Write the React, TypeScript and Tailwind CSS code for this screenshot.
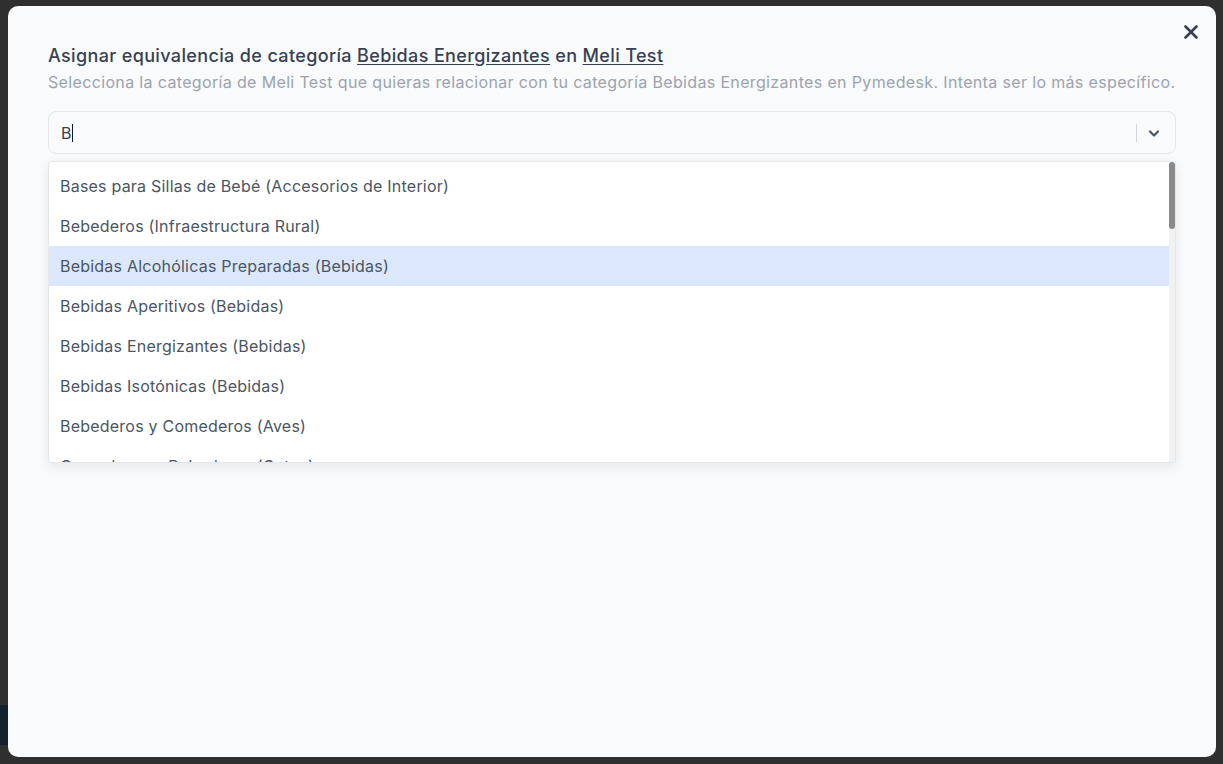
import React from "react";

const items = [
  "Bases para Sillas de Bebé (Accesorios de Interior)",
  "Bebederos (Infraestructura Rural)",
  "Bebidas Alcohólicas Preparadas (Bebidas)",
  "Bebidas Aperitivos (Bebidas)",
  "Bebidas Energizantes (Bebidas)",
  "Bebidas Isotónicas (Bebidas)",
  "Bebederos y Comederos (Aves)",
  "Comederos y Bebederos (Gatos)",
];

export default function App() {
  return (
    <div
      className="w-[1223px] h-[764px] bg-[#2f2f2f] relative overflow-hidden"
      style={{ fontFamily: "Inter, 'Open Sans', sans-serif" }}
    >
      <div className="absolute left-0 top-[705px] w-[8px] h-[40px] bg-[#13222e]" />
      <div className="absolute left-[8px] top-[6px] w-[1208px] h-[751px] bg-[#f9fafb] rounded-[10px] px-[40px] pt-[40px]">
        <button className="absolute right-[11px] top-[12px] w-[28px] h-[28px] flex items-center justify-center text-[#374151]">
          <svg width="14" height="14" viewBox="0 0 14 14" fill="none">
            <path d="M1.5 1.5L12.5 12.5M12.5 1.5L1.5 12.5" stroke="currentColor" strokeWidth="2.6" strokeLinecap="round" />
          </svg>
        </button>
        <h2 className="text-[18px] leading-[20px] font-medium text-[#374151] tracking-[0.36px]">
          Asignar equivalencia de categoría <span className="underline underline-offset-2">Bebidas Energizantes</span> en{" "}
          <span className="underline underline-offset-2">Meli Test</span>
        </h2>
        <p className="mt-[6px] text-[16px] leading-[20px] text-[#9ca3af] tracking-[0.35px] whitespace-nowrap">
          Selecciona la categoría de Meli Test que quieras relacionar con tu categoría Bebidas Energizantes en Pymedesk. Intenta ser lo más específico.
        </p>
        <div className="mt-[19px] w-[1128px] h-[43px] border border-[#e5e7eb] rounded-[8px] bg-[#f9fafb] flex items-center">
          <div className="flex-1 pl-[12px] text-[16px] text-[#374151] flex items-center">
            B<span className="inline-block w-[1px] h-[18px] bg-[#111827] ml-[1px]" />
          </div>
          <div className="w-[1px] h-[18px] bg-[#d1d5db]" />
          <div className="w-[38px] pr-[4px] flex items-center justify-center text-[#4b5563]">
            <svg width="12" height="12" viewBox="0 0 12 12" fill="none">
              <path d="M2 4.5L6 8.5L10 4.5" stroke="currentColor" strokeWidth="2.2" strokeLinecap="round" strokeLinejoin="round" />
            </svg>
          </div>
        </div>
        <div className="mt-[7px] w-[1128px] h-[302px] bg-white border border-[#e5e7eb] rounded-[3px] shadow-[0_4px_12px_rgba(0,0,0,0.08)] flex overflow-hidden">
          <div className="flex-1 pt-[4px] overflow-hidden">
            {items.map((t, i) => (
              <div
                key={t}
                className={`h-[40px] flex items-center pl-[11px] text-[16px] text-[#4b5563] tracking-[0.22px] ${i === 2 ? "bg-[#dbe8fb]" : ""}`}
              >
                {t}
              </div>
            ))}
          </div>
          <div className="w-[6px] bg-[#f1f1f1] flex flex-col">
            <div className="h-[67px] bg-[#8a8a8a] rounded-[3px]" />
          </div>
        </div>
      </div>
    </div>
  );
}
